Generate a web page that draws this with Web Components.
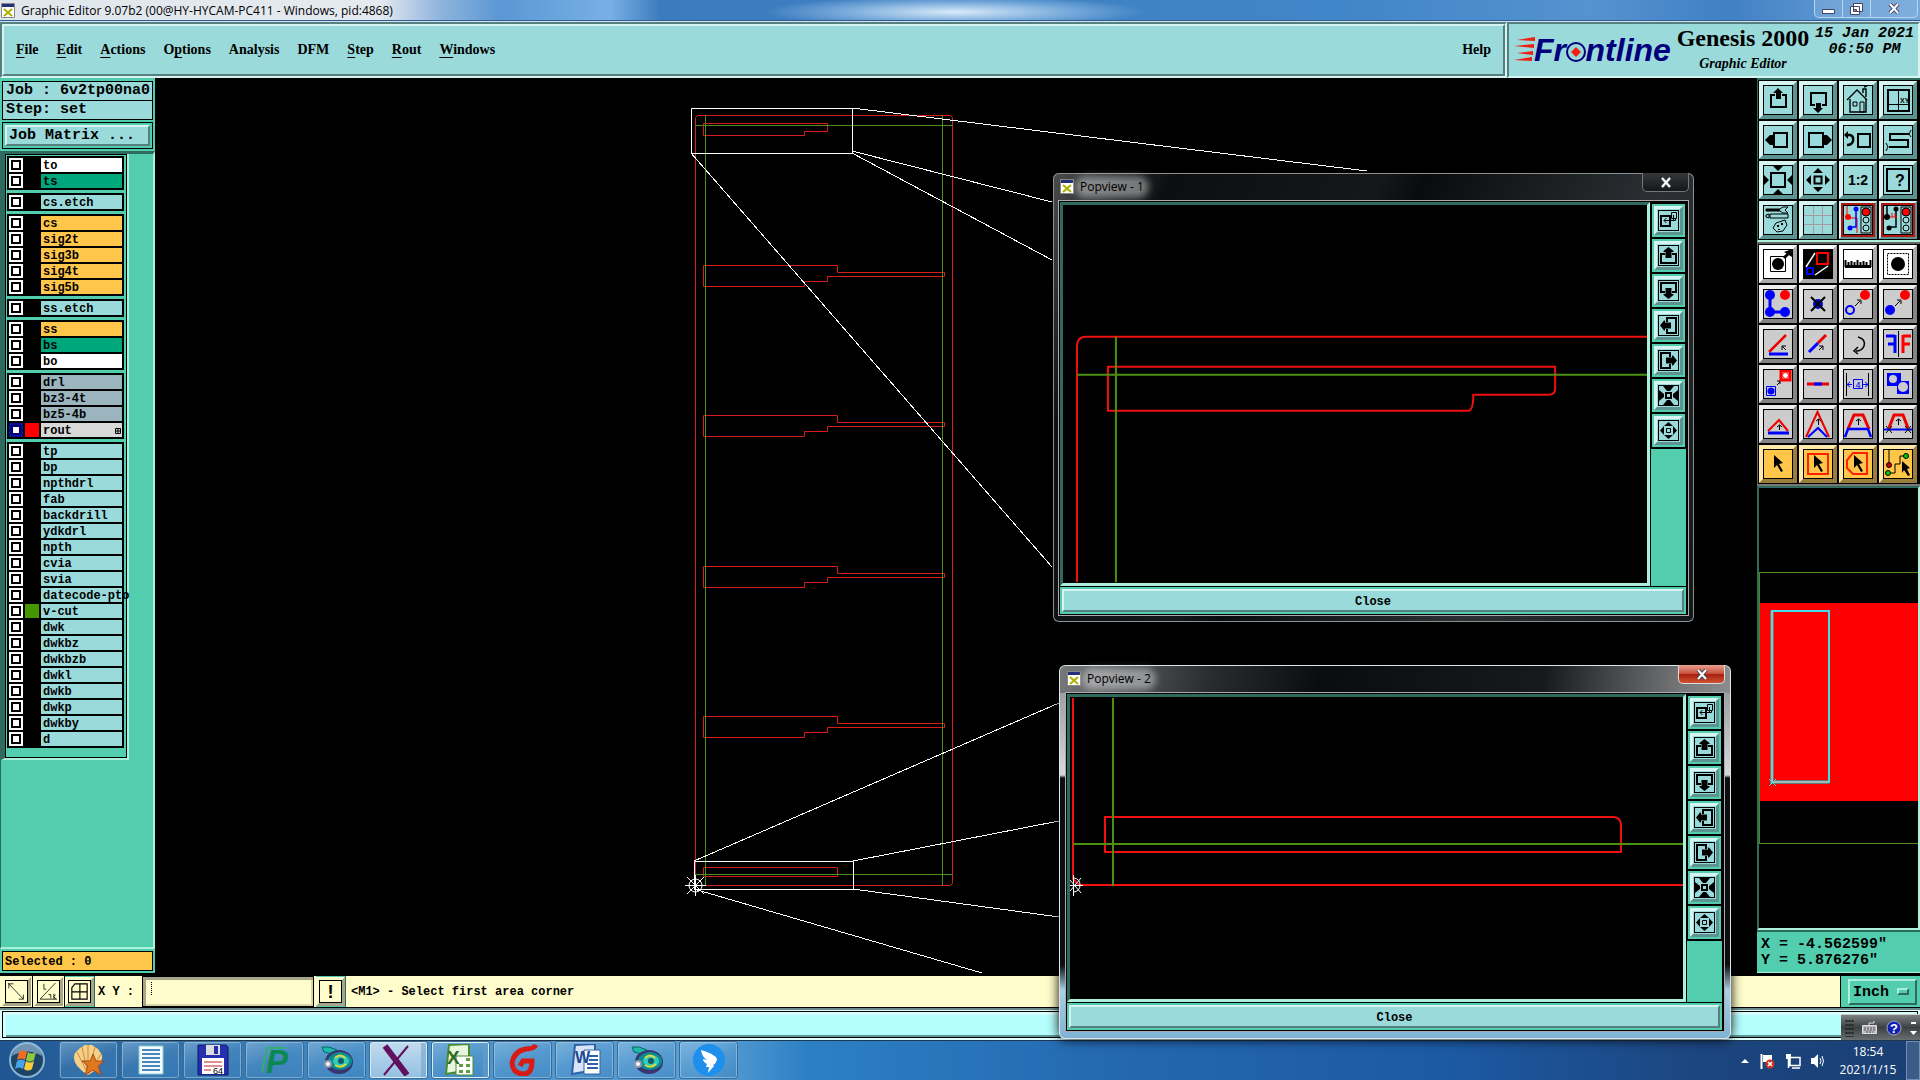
<!DOCTYPE html>
<html lang="en">
<head>
<meta charset="utf-8">
<title>Graphic Editor</title>
<style>
  html, body { margin: 0; height: 100%; }
  body {
    --face: #9adada; --face-hi: #d6f4f2; --face-lo: #55807f;
    --teal: #52ceae; --teal-hi: #aaf0dc; --teal-lo: #2f6a5e;
    --cream: #fffdcb; --amber: #ffc64a;
    --mono: "Liberation Mono", "Courier New", monospace;
    --serif: "Liberation Serif", "Times New Roman", serif;
    --ui: "Open Sans", "Noto Sans", sans-serif;
    background: #000;
    color: #000;
    font: 12px/16px var(--ui);
  }
</style>
</head>
<body>
<graphic-editor></graphic-editor>

<script>
// Tool glyphs, all on a 30x30 grid.
const ICONS = {
  up: '<path d="M12 10H8v12h15V10h-4" fill="none" stroke="#000" stroke-width="2"/><path d="M15 3l5 5h-2v6h-5V8h-3z"/>',
  down: '<path d="M12 20H8V8h15v12h-4" fill="none" stroke="#000" stroke-width="2"/><path d="M15 28l5-5h-2v-5h-5v5h-3z"/>',
  left: '<path d="M11 8h13v14H11z" fill="none" stroke="#000" stroke-width="2"/><path d="M2 15l5-5h4v10H7z"/>',
  right: '<path d="M6 8h14v14H6z" fill="none" stroke="#000" stroke-width="2"/><path d="M29 15l-5-5h-5v10h5z"/>',
  house: '<path d="M4 15L14 5l10 10M7 14v13h16V14M20 8V4h3v8M21 2l3-1" fill="none" stroke="#000" stroke-width="1.4"/><path d="M10 17h4v4h-4zM17 17h4v10h-4z" fill="none" stroke="#000"/>',
  xy: '<path d="M15.500 5v21M5 19.500h21" fill="none" stroke="#000"/><path d="M5 5h21v21H5z" fill="none" stroke="#000" stroke-width="2"/><text x="17" y="18" font-size="7" font-weight="700">XY</text>',
  back: '<path d="M15 9h12v13H15z" fill="none" stroke="#000" stroke-width="2"/><path d="M4 10h3q4 1 3 6-1 4-6 4" fill="none" stroke="#000" stroke-width="2.500"/><path d="M1 10l4-4v8z"/>',
  snake: '<path d="M26 9H7v6h18v7H6" fill="none" stroke="#000" stroke-width="2"/><path d="M28 5l-2 4 2 3M3 18l2 4-2 4" fill="none" stroke="#000"/>',
  fit: '<path d="M8 8h14v14H8z" fill="none" stroke="#000" stroke-width="2"/><path d="M10 1h10l-5 5zM10 29h10l-5-5zM1 10v10l5-5zM29 10v10l-5-5z"/>',
  zoom: '<path d="M11.500 11.500h7v7h-7z" fill="none" stroke="#000" stroke-width="2"/><path d="M10 8h10l-5-5zM10 22h10l-5 5zM8 10v10l-5-5zM22 10v10l5-5z"/>',
  ratio: '<text x="15" y="20" font-size="14" font-weight="700" text-anchor="middle">1:2</text>',
  help: '<path d="M4 4h22v22H4z" fill="none" stroke="#000" stroke-width="2"/><text x="17" y="21" font-size="16" font-weight="700" text-anchor="middle">?</text>',
  setup: '<path d="M3 4h14l3-2h5l-3 3 3 3h-5l-3-2H3zM3 10l3-1v4l-3-1zM7 9h18v4H7z" fill="#9adada" stroke="#000"/><path d="M3 4h14v2H3z"/><path d="M13 18l9-3 2 5-4 6-6 1-4-4z" fill="none" stroke="#000"/><path d="M14 20h2v2h-2zM18 18h2v2h-2zM15 24h2v1h-2z"/>',
  grid: '<path d="M10.500 1v28M19.500 1v28M1 10.500h28M1 19.500h28" stroke="#a89aa0"/>',
  netA: '<path d="M4 1v12h10v15" fill="none" stroke="#f00"/><path d="M13 4v18H8" fill="none" stroke="#00f" stroke-width="1.500"/><circle cx="5" cy="12" r="3" fill="#f00"/><circle cx="13" cy="4" r="2.500" fill="#00f"/><circle cx="7" cy="23" r="2.500" fill="#00f"/>',
  netB: '<path d="M4 1v12M13 4v18H8" fill="none" stroke="#000" stroke-width="1.500"/><path d="M5 12h9M9 8v4M12 8v4" stroke="#f00"/><circle cx="4" cy="12" r="3"/><circle cx="13" cy="4" r="2.500"/><circle cx="6" cy="23" r="2.500"/>',
  light: '<path d="M18 2h10v26H18z" fill="#9adada" stroke="#000"/><circle cx="23" cy="7" r="4" fill="#f00" stroke="#000"/><circle cx="23" cy="15" r="3" fill="none" stroke="#000"/><circle cx="23" cy="23" r="3" fill="none" stroke="#000"/>',
  pad: '<path d="M7.500 7.500h15v15h-15z" fill="none" stroke="#000"/><circle cx="15" cy="15" r="6"/><path d="M21 9l4-4" stroke="#000" stroke-width="3"/><path d="M21 3l8-3v8z"/>',
  popview: '<path d="M1 1h28v28H1z"/><path d="M12 4L3 18M25 17l-13 9" stroke="#fff" stroke-width="1.500"/><path d="M14 4h11v11H14z" fill="none" stroke="#f00" stroke-width="2"/><path d="M4 19h6v6H4z" fill="none" stroke="#00f" stroke-width="2"/>',
  ruler: '<path d="M2 17.500h26" stroke="#000" stroke-width="3"/><path d="M2.500 11v7M5.500 13v5M8.500 12v6M11.500 13v5M14.500 11v7M17.500 13v5M20.500 12v6M23.500 13v5M27.500 11v7" stroke="#000" stroke-width="2"/>',
  area: '<path d="M4.500 4.500h21v21h-21z" fill="none" stroke="#000" stroke-dasharray="2 1"/><circle cx="15" cy="15" r="7"/>',
  link: '<path d="M7 7v16h15" fill="none" stroke="#00f" stroke-width="3"/><g fill="#00f"><circle cx="7" cy="6" r="5"/><circle cx="7" cy="23" r="5"/><circle cx="22" cy="23" r="5"/></g><circle cx="22" cy="6" r="5" fill="#f00"/>',
  erase: '<circle cx="15" cy="15" r="5" fill="#00c"/><path d="M8 8l14 14M22 8L8 22" stroke="#000" stroke-width="2"/>',
  move: '<circle cx="22" cy="6" r="5" fill="#f00"/><circle cx="7" cy="21" r="4" fill="none" stroke="#00f" stroke-width="2"/><path d="M12 17l5-5M14 11h4v4" fill="none" stroke="#000"/>',
  copy: '<circle cx="22" cy="6" r="5" fill="#f00"/><circle cx="7" cy="21" r="5" fill="#00f"/><path d="M12 17l5-5M14 11h4v4" fill="none" stroke="#000"/>',
  angle: '<path d="M6 23L23 6" stroke="#e00" stroke-width="2.500"/><path d="M6 25h19" stroke="#00f" stroke-width="3"/><path d="M23 21l-4-4M19 21v-4h4" fill="none" stroke="#000"/>',
  stretch: '<path d="M15 14l8-8" stroke="#e00" stroke-width="3"/><path d="M6 23l9-9" stroke="#00f" stroke-width="3"/><path d="M16 21l4-4M16 17h4v4" fill="none" stroke="#000"/>',
  rotate: '<path d="M15 8q8 2 6 9-2 5-8 5M15 18l-4 4 4 3" fill="none" stroke="#000" stroke-width="1.500"/>',
  mirror: '<path d="M15.500 2v26" stroke="#000"/><path d="M12 6v18M12 7H3M12 15H5" fill="none" stroke="#00f" stroke-width="3"/><path d="M20 6v18M20 7h8M20 15h7" fill="none" stroke="#f00" stroke-width="3"/>',
  swap: '<path d="M18 2h9v9h-9z" fill="#fff" stroke="#f00" stroke-width="3"/><circle cx="22.500" cy="6.500" r="3" fill="#fff" stroke="#f00"/><path d="M3.500 17.500h9v9h-9z" fill="none" stroke="#00f"/><circle cx="8" cy="22" r="3.500" fill="#00f"/><path d="M14 16l3-3M14 12h3v3" fill="none" stroke="#000"/>',
  split: '<path d="M4 15h22" stroke="#e00" stroke-width="3"/><path d="M11 15h8" stroke="#00f" stroke-width="3"/>',
  width: '<path d="M3.500 4v23M25.500 4v23" stroke="#000"/><path d="M4 15.500h5M20 15.500h5M7 13l-3 2.500 3 2.500M22 13l3 2.500-3 2.500M10.500 10.500h9v9h-9z" fill="none" stroke="#00f"/><text x="15" y="19" font-size="9" fill="#00f" text-anchor="middle">4</text>',
  merge: '<path d="M4 4h14v8h8v13H14v-8H4z" fill="#00f"/><circle cx="10" cy="10" r="4" fill="#ccc"/><circle cx="20" cy="18" r="5" fill="#ccc"/>',
  tri: '<path d="M5 22L16 11l9 11" fill="none" stroke="#e00" stroke-width="2"/><path d="M5 24h21" stroke="#00f" stroke-width="3"/><path d="M16.500 21v-5M14 18l2.500-2 2.500 2" fill="none" stroke="#000"/>',
  peak: '<path d="M3 28L14.500 3 26 28" fill="none" stroke="#e00" stroke-width="2"/><path d="M5 28l10-9 9 9" fill="none" stroke="#00f" stroke-width="2"/><path d="M15.500 16v-6M13 12l2.500-2 2.500 2" fill="none" stroke="#000"/>',
  trap: '<path d="M5 20L11 6h9l6 14" fill="none" stroke="#e00" stroke-width="3"/><path d="M2 28l3-8h20l3 8" fill="none" stroke="#00f" stroke-width="2.500"/><path d="M15.500 16v-6M13 12l2.500-2 2.500 2" fill="none" stroke="#000"/>',
  cut: '<path d="M6 19L11 6h9l5 13" fill="none" stroke="#e00" stroke-width="3"/><path d="M1 20.500h28" stroke="#00f" stroke-width="2"/><path d="M15.500 16v-6M13 12l2.500-2 2.500 2M3 17l6 7M9 17l-6 7M22 17l6 7M28 17l-6 7" fill="none" stroke="#000"/>',
  arrow: '<path d="M11 6l9 8-4 1 4 7-2 1-4-7-3 3z"/>',
  boxSel: '<path d="M5 5h20v20H5z" fill="none" stroke="#f20" stroke-width="2"/><path d="M11 6l9 8-4 1 4 7-2 1-4-7-3 3z"/>',
  polySel: '<path d="M10 4h14v21H10l-6-6V11z" fill="none" stroke="#f20" stroke-width="2"/><path d="M11 6l9 8-4 1 4 7-2 1-4-7-3 3z"/>',
  netSel: '<path d="M6 1v14M5 24h7v-9h5V7h6" fill="none" stroke="#000"/><circle cx="6" cy="16" r="2.500" fill="#c00" stroke="#000"/><circle cx="5" cy="24" r="2.500" fill="#0c0" stroke="#000"/><circle cx="23" cy="7" r="2.500" fill="#0c0" stroke="#000"/><path d="M19 12l8 7-3 1 3 6-2 1-4-6-2 3z"/>',
  snap: '<path d="M4 4l20 21M5 11V5h6M24 19v6h-6" fill="none" stroke="#000"/>',
  slope: '<path d="M24 4L4 25h22M9 5v7h3M15 19h3v5M22 18v7M24 19l-2 3 3 3" fill="none" stroke="#000"/>',
  cells: '<path d="M9 5h16v20H5V10zM15.500 5v20M5 15.500h20" fill="none" stroke="#000" stroke-width="1.500"/>',
  bang: '<text x="15" y="24" font-size="24" font-weight="700" text-anchor="middle">!</text>'
};
ICONS.netA += ICONS.light;
ICONS.netB += ICONS.light;

// Smaller set for the popview side bar, on a 21x21 grid.
const MINI = {
  source: '<path d="M3 6h9v10H3z" fill="none" stroke="#000" stroke-width="2"/><path d="M13.500 2.500h5v6h-5zM17.500 8v2.500H6M8.500 8L6 10.500 8.500 13M15.500 5v5" fill="none" stroke="#000"/>',
  up: '<path d="M7 9H3v9h15V9h-4" fill="none" stroke="#000" stroke-width="2"/><path d="M10.500 2l5 4v1h-2v6h-6V7h-2V6z"/>',
  down: '<path d="M7 12H3V3h15v9h-4" fill="none" stroke="#000" stroke-width="2"/><path d="M10.500 19l5-4v-1h-2V8h-6v6h-2v1z"/>',
  left: '<path d="M9 7V3h9v15H9v-4" fill="none" stroke="#000" stroke-width="2"/><path d="M2 10.500l4-5h1v2h6v6H7v2H6z"/>',
  right: '<path d="M12 7V3H3v15h9v-4" fill="none" stroke="#000" stroke-width="2"/><path d="M19 10.500l-4-5h-1v2H8v6h6v2h1z"/>',
  fit: '<path d="M8 8h5v5H8z" fill="none" stroke="#000" stroke-width="2"/><path d="M5 1h11l-4 5H9zM5 20h11l-4-5H9zM1 5v11l5-4V9zM20 5v11l-5-4V9z"/>',
  zoom: '<path d="M8.500 8.500h4v4h-4z" fill="none" stroke="#000"/><path d="M6 6h9l-4.500-4zM6 15h9l-4.500 4zM6 6v9l-4-4.500zM15 6v9l4-4.500z"/>'
};

const X_ICON = `<svg class="x" width="14" height="15" viewBox="0 0 14 15" aria-hidden="true">
  <path d="M.5.500h13v14H.5z" fill="#fff" stroke="#888"/><path d="M1 1h12v3H1z" fill="#22307a"/>
  <path d="M3 6l8 7M11 6l-8 7" stroke="#b0b000" stroke-width="2"/></svg>`;

class ToolButton extends HTMLElement {
  constructor() {
    super();
    this.attachShadow({ mode: 'open' });
  }

  connectedCallback() {
    let name = this.getAttribute('icon');
    let mini = this.hasAttribute('mini');
    let size = mini ? 21 : 30;
    this.shadowRoot.innerHTML = `
      <style>
        :host { display: block; --bg: #9adada; --hi: #d6f4f2; --lo: #5d9492; }
        :host([tone="white"]) { --bg: #fff; --hi: #fff; --lo: #aaa; }
        :host([tone="grey"]) { --bg: #ccc; --hi: #eee; --lo: #848484; }
        :host([tone="amber"]) { --bg: #ffc64a; --hi: #ffe9a8; --lo: #9a7c3c; }
        :host([tone="cream"]) { --bg: #fffdcb; --hi: #fffdcb; --lo: #a8a68a; }
        button {
          display: grid; place-items: center; box-sizing: border-box;
          width: var(--size, 38px); height: var(--size, 38px); padding: 0;
          background: var(--bg); border: var(--bevel, 4px) solid;
          border-color: var(--hi) var(--lo) var(--lo) var(--hi);
        }
        svg { display: block; width: var(--glyph, 30px); height: var(--glyph, 30px); outline: 1px solid #000; outline-offset: -1px; font-family: "Liberation Sans", Arial, sans-serif; }
        :host([tone="red"]) svg { box-shadow: 0 0 0 2px #b01818; }
      </style>
      <button aria-label="${name}"><svg viewBox="0 0 ${size} ${size}">${mini ? MINI[name] : ICONS[name]}</svg></button>`;
  }
}
customElements.define('tool-button', ToolButton);

class TitleBar extends HTMLElement {
  constructor() {
    super();
    let root = this.attachShadow({ mode: 'open' });
    root.innerHTML = `
      <style>
        :host {
          display: flex; align-items: center; justify-content: space-between; box-sizing: border-box;
          height: 22px; border-bottom: 1px solid #cfe3f2; box-shadow: inset 0 -1px #2c5c90;
          background:
            radial-gradient(190px 16px at 955px 12px, #d8ebfa, #a9cdef88 60%, transparent),
            linear-gradient(90deg, #dfe6ec 0, #e4eaf0 380px, #8fb4dc 440px, #5b97d4 500px, #78b0e6 610px, #3c7cbe 660px, #4186c8 70%, #5592d0 83%, #4080c4 90%, #76a8da);
        }
        .name { display: flex; align-items: center; gap: 6px; padding-left: 1px; }
        .buttons { display: flex; align-self: flex-start; margin-right: 2px; border: 1px solid #b8d6f0; border-top: 0; border-radius: 0 0 5px 5px; background: #8fbae266; }
        button { height: 17px; width: 28px; padding: 0; border: 0; border-right: 1px solid #b8d6f0; background: none; display: grid; place-items: center; }
        button:last-child { width: 46px; border: 0; }
      </style>
      <div class="name">${X_ICON}<span><slot></slot></span></div>
      <div class="buttons">
        <button aria-label="Minimize"><svg width="13" height="12"><path d="M.5 6.500h12v4H.5z" fill="#fff" stroke="#446"/></svg></button>
        <button aria-label="Restore"><svg width="13" height="12"><path d="M3.500.500h9v8h-9zM.5 3.500h9v8h-9z" fill="#fff" stroke="#446"/><path d="M3.500 6.500h3v2h-3z" fill="#79b" stroke="#446"/></svg></button>
        <button aria-label="Close"><svg width="12" height="11"><path d="M2 1l8 9M10 1L2 10" stroke="#446" stroke-width="4"/><path d="M2 1l8 9M10 1L2 10" stroke="#fff" stroke-width="2"/></svg></button>
      </div>`;
  }
}
customElements.define('title-bar', TitleBar);

class MenuBar extends HTMLElement {
  constructor() {
    super();
    let root = this.attachShadow({ mode: 'open' });
    root.innerHTML = `
      <style>
        :host { display: flex; height: 56px; background: var(--face); }
        .frame { box-sizing: border-box; border: 2px solid; border-color: var(--face-lo) var(--face-hi) var(--face-hi) var(--face-lo); display: flex; }
        .menus { flex: 1; }
        .raised { flex: 1; display: flex; align-items: center; gap: 18px; padding: 0 12px 1px; border: 2px solid; border-color: var(--face-hi) var(--face-lo) var(--face-lo) var(--face-hi); }
        .brand { flex: 0 0 413px; min-width: 0; padding: 0 3px 0 5px; gap: 2px; }
        ::slotted(button) { border: 0; padding: 0; background: none; font: 700 14px/20px var(--serif); }
        ::slotted(.end) { margin-left: auto; }
        .logo { display: block; flex: none; margin-top: 4px; overflow: visible; font: italic 700 32px "Liberation Sans", Arial, sans-serif; }
        .product { flex: none; width: 138px; text-align: center; font: 700 24px/28px var(--serif); white-space: nowrap; }
        .product small { display: block; font: italic 700 14px/24px var(--serif); }
        time { flex: 1; text-align: center; font: italic 700 15px/16px var(--mono); padding-top: 2px; white-space: nowrap; }
      </style>
      <div class="frame menus"><div class="raised"><slot></slot></div></div>
      <div class="frame brand">
        <svg class="logo" width="158" height="44">
          <path d="M3 12l18-3v4zM0 18l20-2v4zM3 25l16-2v4zM0 32l18-3v4z" fill="#f02010"/>
          <text x="20" y="33" fill="#00007c">Fr<tspan fill="transparent">o</tspan>ntline</text>
          <circle cx="62" cy="24" r="9" fill="none" stroke="#00007c" stroke-width="2"/>
          <path d="M62 19l5 5-5 5-5-5z" fill="#f02010"/>
        </svg>
        <div class="product">Genesis 2000<small>Graphic Editor</small></div>
        <time>15 Jan 2021<br>06:50 PM</time>
      </div>`;
  }
}
customElements.define('menu-bar', MenuBar);

class LayerRow extends HTMLElement {
  constructor() {
    super();
    this.attachShadow({ mode: 'open' });
  }

  connectedCallback() {
    let on = this.hasAttribute('on');
    this.shadowRoot.innerHTML = `
      <style>
        :host { display: block; --row: var(--face); --swatch: #000; }
        :host([tone="white"]) { --row: #fff; }
        :host([tone="green"]) { --row: #00a67c; }
        :host([tone="amber"]) { --row: var(--amber); }
        :host([tone="slate"]) { --row: #9bb4be; }
        :host([tone="light"]) { --row: #d8d8d8; --swatch: #f00; }
        :host([cut]) { --swatch: #469600; }
        label { display: flex; gap: 2px; height: 14px; }
        input { appearance: none; margin: 0; width: 14px; height: 14px; box-sizing: border-box; border: 2px solid #fff; background: #fff; box-shadow: inset 0 0 0 2px #000; }
        input:checked { border-color: #0a0a9c; box-shadow: inset 0 0 0 2px #00006c; }
        i { width: 14px; background: var(--swatch); }
        span { width: 79px; padding-left: 2px; background: var(--row); font: 700 12px/16px var(--mono); white-space: nowrap; }
        svg { margin-left: -9px; margin-top: 5px; }
      </style>
      <label><input type="checkbox" ${on ? 'checked' : ''}><i></i><span><slot></slot></span>
      ${on ? '<svg width="6" height="6"><path d="M.5.500h5v5h-5zM3 0v6M0 3h6" fill="none" stroke="#000"/></svg>' : ''}</label>`;
  }
}
customElements.define('layer-row', LayerRow);

class LayerGroup extends HTMLElement {
  constructor() {
    super();
    let root = this.attachShadow({ mode: 'open' });
    root.innerHTML = `<style>:host{display:grid;gap:2px;padding:2px;background:#000;}</style><slot></slot>`;
  }
}
customElements.define('layer-group', LayerGroup);

class JobPanel extends HTMLElement {
  constructor() {
    super();
    let root = this.attachShadow({ mode: 'open' });
    root.innerHTML = `
      <style>
        :host { display: flex; flex-direction: column; box-sizing: border-box; width: 155px; padding: 3px 2px 2px; margin-bottom: 2px; background: var(--teal); font: 700 15px/18px var(--mono); }
        .job { border: 1px solid #000; background: var(--face); }
        .job div { padding-left: 3px; height: 18px; white-space: nowrap; }
        .job div + div { border-top: 1px solid #000; }
        .matrix { margin-top: 2px; padding: 2px; border: 1px solid #000; }
        button { display: block; width: 100%; height: 21px; padding: 0 0 0 2px; text-align: left; font: inherit; background: var(--face); border: 2px solid; border-color: var(--face-hi) var(--face-lo) var(--face-lo) var(--face-hi); }
        .well { flex: 1; margin: 2px -2px 0; border: solid; border-width: 3px 2px 2px 1px; border-color: var(--teal-lo) var(--teal-hi) var(--teal-hi) var(--teal-lo); }
        .list { width: 122px; border: solid; border-width: 0 2px 2px 4px; border-color: var(--teal-hi) var(--teal-hi) var(--teal-hi) var(--teal-lo); }
        .inner { display: grid; gap: 3px; padding: 1px 2px 9px 1px; border: 1px solid #000; }
        .selected { margin-top: 2px; padding-left: 2px; height: 18px; border: 1px solid #000; background: var(--amber); font: 700 12px/20px var(--mono); }
      </style>
      <div class="job"><div>Job : 6v2tp00na0</div><div>Step: set</div></div>
      <div class="matrix"><button>Job Matrix ...</button></div>
      <div class="well"><div class="list"><div class="inner"><slot></slot></div></div></div>
      <div class="selected">Selected : 0</div>`;
  }
}
customElements.define('job-panel', JobPanel);

class PopView extends HTMLElement {
  constructor() {
    super();
    this.attachShadow({ mode: 'open' });
  }

  connectedCallback() {
    let tools = Object.keys(MINI);
    this.shadowRoot.innerHTML = `
      <style>
        :host {
          position: absolute; z-index: 2; box-sizing: border-box; display: flex; flex-direction: column;
          padding: 0 5px 6px; border-radius: 6px; box-shadow: inset 0 0 0 1px #8a8f92;
          background: linear-gradient(115deg, #4a4c4e, #0c0e10 110px, #15171a 300px, #0a0b0c 340px, #2c3034 560px, #141618);
        }
        :host([active]) {
          padding: 0 6px 7px; box-shadow: inset 0 0 0 1px #dfe4e6, 0 0 12px #000;
          background:
            linear-gradient(100deg, #77797b, #2a2d30 150px, #0a0c0f 260px, #17191c 480px, #77797b 620px, #8a8c8e) 0 0 / 100% 28px no-repeat,
            linear-gradient(#8a8c8e, #d5d9db 110px, #0c0e12 113px, #0c0e12 300px, #a9cfe4 325px, #7fb2d6);
        }
        header { height: 27px; display: flex; justify-content: space-between; }
        .name { display: flex; align-items: center; gap: 6px; padding-left: 2px; }
        .name span { border-radius: 8px; background: #ffffff66; box-shadow: 0 0 7px 5px #ffffff66; line-height: 12px; }
        .x-close { width: 47px; height: 19px; padding: 0; border: 1px solid #777; border-top: 0; border-radius: 0 0 5px 5px; background: linear-gradient(#35383b, #15171a); display: grid; place-items: center; }
        :host([active]) .x-close { background: linear-gradient(#e8a090, #c8503c 48%, #a82010 52%, #d05030); border-color: #ddd; }
        .body { flex: 1; min-height: 0; display: grid; grid-template: minmax(0, 1fr) 27px / minmax(0, 1fr) 35px; gap: 1px; padding: 1px 2px 1px 1px; border: 1px solid #a8acae; background: #000; }
        .canvas { border: 3px solid; border-color: var(--teal-lo) var(--teal-hi) var(--teal-hi) var(--teal-lo); overflow: hidden; min-height: 0; }
        .tools { background: #000; display: flex; flex-direction: column; gap: 2px; padding-top: 2px; }
        .tools tool-button { padding: 2px; margin: 0 1px; background: var(--teal); --size: 29px; --bevel: 3px; --glyph: 21px; }
        .tools i { flex: 1; background: var(--teal); }
        .close { grid-column: 1 / -1; padding: 2px; background: var(--teal); }
        .close button { width: 100%; height: 23px; padding: 2px 0 0; background: var(--face); border: 2px solid; border-color: var(--face-hi) var(--face-lo) var(--face-lo) var(--face-hi); font: 700 12px/16px var(--mono); }
      </style>
      <header>
        <div class="name">${X_ICON}<span>${this.getAttribute('name')}</span></div>
        <button class="x-close" aria-label="Close window"><svg width="12" height="11"><path d="M2 1l8 9M10 1L2 10" stroke="#445" stroke-width="4"/><path d="M2 1l8 9M10 1L2 10" stroke="#fff" stroke-width="2"/></svg></button>
      </header>
      <div class="body">
        <div class="canvas"><slot></slot></div>
        <div class="tools">${tools.map((t) => `<tool-button mini icon="${t}"></tool-button>`).join('')}<i></i></div>
        <div class="close"><button>Close</button></div>
      </div>`;
  }
}
customElements.define('pop-view', PopView);

class WorkSpace extends HTMLElement {
  constructor() {
    super();
    let slit = (y) => `<path d="M703.500 ${y}.500h134v7h107v4h-117v5h-23v5h-101z"/>`;
    let root = this.attachShadow({ mode: 'open' });
    root.innerHTML = `
      <style>
        :host { display: block; position: relative; flex: 1; min-width: 0; background: #000; }
        svg { display: block; position: absolute; inset: 0; width: 100%; height: 100%; }
        pop-view svg { position: static; }
        g, path { fill: none; }
        .r { stroke: #d81c1c; } .g { stroke: #4f8f20; } .w { stroke: #fff; }
        .r2 { stroke: #f01010; stroke-width: 2; } .g2 { stroke: #4d9010; stroke-width: 2; }
        .one { left: 898px; top: 95px; width: 641px; height: 449px; }
        .two { left: 904px; top: 587px; width: 672px; height: 374px; }
      </style>
      <svg viewBox="155 78 1602 897" preserveAspectRatio="xMinYMin meet">
        <g class="r">
          <path d="M697.500 115.500h253l2 2v766l-2 2h-255v-768z"/>
          <path d="M703.500 123.500h124v8h-23v4h-101z"/>
          ${[265, 415, 566, 716].map(slit).join('')}
          <path d="M703.500 867.500h134v9h-134z"/>
        </g>
        <path class="g" d="M705.500 115v771M942.500 115v771M695 125.500h258M695 874.500h258"/>
        <g class="w">
          <path d="M691.500 108.500h161v45h-161zM694.500 861.500h159v28h-159z"/>
          <path shape-rendering="crispEdges" d="M852 108l515 63M852 151l200 51M852 153l200 107M691 153l361 414M694 861l365-158M853 861l206-40M853 889l206 28M694 889l288 84"/>
          <circle cx="695.500" cy="885.500" r="6.500"/>
          <path d="M685 885.500h21M695.500 875v21M687 877l17 17M704 877l-17 17"/>
        </g>
      </svg>
      <pop-view class="one" name="Popview - 1">
        <svg viewBox="1063 205 585 378" preserveAspectRatio="xMinYMin meet">
          <path class="r2" d="M1648 337h-562q-9 0-9 10v236"/>
          <path class="r2" d="M1108 367h448v22q0 6-7 6h-75q0 16-5 16h-361z"/>
          <path class="g2" d="M1116 337v246M1077 375h571"/>
        </svg>
      </pop-view>
      <pop-view class="two" name="Popview - 2" active>
        <svg viewBox="1070 697 613 302" preserveAspectRatio="xMinYMin meet">
          <path class="r2" d="M1073 698v181l6 6h604"/>
          <path class="r2" d="M1105 817h509q7 1 7 8v27h-516z"/>
          <path class="g2" d="M1113 698v188M1073 844h610"/>
          <path class="w" d="M1070 885.500h13M1073.500 875v21M1070 880l11 13M1070 891l11-13M1074 878q6 1 6 7t-6 7"/>
        </svg>
      </pop-view>`;
  }
}
customElements.define('work-space', WorkSpace);

class ToolPanel extends HTMLElement {
  constructor() {
    super();
    let cells = (names, tone) => names.split(' ').map((n) => `<tool-button icon="${n}" tone="${tone}"></tool-button>`).join('');
    let root = this.attachShadow({ mode: 'open' });
    root.innerHTML = `
      <style>
        :host { display: flex; flex-direction: column; width: 163px; box-sizing: border-box; }
        .grid { display: grid; grid-template-columns: repeat(4, 38px); gap: 2px; padding: 1px 0 1px 1px; border: 2px solid; border-color: var(--teal-lo) var(--teal-hi) var(--teal-hi) var(--teal-lo); border-right: 0; border-left-width: 1px; background: #000; }
        .edit { border-color: #666 #aaa #777 #666; }
        .map { flex: 1; min-height: 0; box-sizing: border-box; border: 2px solid; border-color: var(--teal-lo) var(--teal-hi) var(--teal-hi) var(--teal-lo); }
        .map svg { display: block; width: 100%; height: 100%; }
        output { display: block; padding: 5px 4px; margin-bottom: 2px; height: 30px; background: var(--teal); border-top: 2px solid var(--teal-lo); border-bottom: 1px solid var(--teal-hi); font: 700 15px/16px var(--mono); white-space: pre; }
      </style>
      <div class="grid">
        ${cells('up down house xy left right back snake fit zoom ratio help setup grid', '')}
        ${cells('netA netB', 'red')}
      </div>
      <div class="grid edit">
        ${cells('pad popview ruler area', 'white')}
        ${cells('link erase move copy angle stretch rotate mirror swap split width merge tri peak trap cut', 'grey')}
        ${cells('arrow boxSel polySel netSel', 'amber')}
      </div>
      <div class="map">
        <svg viewBox="1759 488 159 440" preserveAspectRatio="xMinYMin slice" shape-rendering="crispEdges">
          <path d="M1759 603h160v198h-160z" fill="#f00"/>
          <path d="M1759 572.500h160M1759 843.500h160M1759.500 572v272" stroke="#4a8a20"/>
          <path d="M1772 611v171h57" fill="none" stroke="#5a7a7a" stroke-width="4"/>
          <path d="M1772 611v171h57" fill="none" stroke="#a8b8b8" stroke-width="2"/>
          <path d="M1771 611h58v172" fill="none" stroke="#40dce8" stroke-width="2"/>
          <path d="M1769 779l7 7M1776 779l-7 7" stroke="#40dce8"/>
        </svg>
      </div>
      <output>X = -4.562599"
Y = 5.876276"</output>`;
  }
}
customElements.define('tool-panel', ToolPanel);

class PromptLine extends HTMLElement {
  constructor() {
    super();
    let root = this.attachShadow({ mode: 'open' });
    root.innerHTML = `
      <style>
        :host { display: flex; align-items: stretch; box-sizing: border-box; height: 33px; padding-left: 1px; border: solid #000; border-width: 1px 0; background: var(--cream); font: 700 12px/32px var(--mono); }
        tool-button { padding: 1px; border-right: 1px solid #000; --size: 29px; --bevel: 3px; --glyph: 23px; }
        tool-button.on { background: var(--teal); border-color: var(--teal-lo); padding: 1px 0; }
        label { padding-left: 3px; width: 44px; white-space: nowrap; }
        input {
          width: 172px; height: 31px; box-sizing: border-box; padding: 0 4px; border: 1px solid #000;
          background: repeating-linear-gradient(#000 0 1px, transparent 1px 2px) 8px 5px / 1px 14px no-repeat var(--cream);
          box-shadow: inset 3px 3px #a8a68a, inset -2px -2px #d8d6a8; font: 700 12px/16px var(--mono);
        }
        .bang { margin-left: 2px; }
        p { margin: 0; padding-left: 5px; flex: 1; }
        .unit { display: flex; align-items: center; box-sizing: border-box; width: 80px; padding: 0 3px 0 7px; background: var(--teal); border-left: 1px solid #000; }
        .option { flex: 1; display: flex; align-items: center; height: 22px; border: 2px solid; border-color: var(--teal-hi) var(--teal-lo) var(--teal-lo) var(--teal-hi); }
        select { appearance: none; flex: 1; min-width: 0; padding: 2px 0 0 3px; border: 0; background: none; font: 700 15px/20px var(--mono); color: #000; }
        .option i { width: 8px; height: 3px; margin-right: 6px; border: 2px solid; border-color: var(--teal-hi) var(--teal-lo) var(--teal-lo) var(--teal-hi); }
      </style>
      <tool-button icon="snap" tone="cream"></tool-button>
      <tool-button icon="slope" tone="cream"></tool-button>
      <tool-button class="on" icon="cells" tone="cream"></tool-button>
      <label for="xy">X Y :</label>
      <input id="xy" type="text">
      <tool-button class="on bang" icon="bang" tone="cream"></tool-button>
      <p>&lt;M1&gt; - Select first area corner</p>
      <div class="unit"><div class="option"><select aria-label="Units"><option>Inch</option></select><i></i></div></div>`;
  }
}
customElements.define('prompt-line', PromptLine);

class StatusLine extends HTMLElement {
  constructor() {
    super();
    let root = this.attachShadow({ mode: 'open' });
    root.innerHTML = `
      <style>
        :host { display: block; position: relative; box-sizing: border-box; height: 32px; padding: 1px 2px 0; border-top: 2px solid #6a8a8a; border-bottom: 2px solid #dff; background: #dff; }
        .bar { height: 17px; border: 1px solid #000; background: #b4fffe; box-shadow: inset 3px 3px #d8fffe, inset -2px -2px #5a9a98; padding: 4px; }
        .lang { position: absolute; right: 0; top: 4px; z-index: 3; display: flex; align-items: center; justify-content: space-between; box-sizing: border-box; width: 79px; height: 26px; padding: 0 3px 0 4px; border-top: 1px solid #ccc; background: linear-gradient(#7c8284, #3c4244 50%, #6a7072); }
      </style>
      <div class="bar"></div>
      <div class="lang">
        <svg width="9" height="18"><path d="M1.500 1v17M4.500 1v17M7.500 1v17" stroke="#222" stroke-dasharray="2 2" stroke-width="2"/></svg>
        <svg width="15" height="13"><path d="M.5 4.500h14v8H.5z" fill="#bbb" stroke="#ddd"/><path d="M2 7h11M2 9h11M4 11h7" stroke="#555" stroke-dasharray="2 1"/><path d="M7 4V2h5V0" fill="none" stroke="#ddd"/></svg>
        <svg width="16" height="16"><circle cx="8" cy="8" r="7" fill="#1020b0" stroke="#aab"/><text x="8" y="13" text-anchor="middle" font-family="Liberation Sans, sans-serif" font-size="13" font-weight="700" fill="#fff">?</text></svg>
        <svg width="7" height="16"><path d="M1 2h5v2H1zM0 11h7l-3.500 4z" fill="#fff"/></svg>
      </div>`;
  }
}
customElements.define('status-line', StatusLine);

// Taskbar pictures, 32x32.
const APPS = {
  Shell: '<path d="M15 31Q-3 20 2 9l5-5 5-3h7l6 4 4 6q1 12-14 20z" fill="#f6d088"/><path d="M15 30L4 8M15 30L9 3M15 30V1M15 30l7-27M15 30L28 10" stroke="#c88a38"/><path d="M20 10l3 7 8 0-6 5 3 9-8-5-8 5 3-9-6-5h8z" fill="#e07820" stroke="#a84c10"/>',
  Notes: '<path d="M4 2h24v28H4z" fill="#f4fbff" stroke="#8cc"/><path d="M7 6h18M7 10h18M7 14h18M7 18h18M7 22h18M7 26h18" stroke="#4888b8" stroke-width="2"/>',
  Floppy: '<path d="M1 1h28l2 2v28H1z" fill="#2430b0" stroke="#101860"/><path d="M9 1h14v10H9z" fill="#ddd"/><path d="M17 2h4v8h-4z" fill="#2430b0"/><path d="M5 14h22v16H5z" fill="#fff"/><path d="M7 18h18M7 22h18M7 26h7" stroke="#c02020"/><text x="16" y="30" font-size="9">64</text>',
  Planner: '<path d="M3 28L8 4h18" fill="none" stroke="#30b070" stroke-width="2"/><text x="7" y="29" font-size="33" font-style="italic" font-weight="700" fill="#0a8a50">P</text>',
  Disc: '<path d="M1 3h7l8 3-5 4-8-2z" fill="#20b8a8" stroke="#066"/><ellipse cx="18" cy="18" rx="14" ry="12" fill="#3a3470"/><ellipse cx="19" cy="17" rx="12" ry="9" fill="#0c8c90"/><ellipse cx="20" cy="17" rx="8" ry="6" fill="#30ccb8"/><path d="M14 14q5-5 10 0M14 21q6 4 11-1" fill="none" stroke="#e0d840" stroke-width="2"/><ellipse cx="20" cy="17" rx="3" ry="3" fill="#145a68"/><circle cx="7" cy="20" r="4" fill="#9098b0"/><circle cx="7" cy="20" r="2" fill="#fff"/>',
  Xming: '<path d="M5 2L27 31" stroke="#60105c" stroke-width="6"/><path d="M28 2L4 31" stroke="#60105c" stroke-width="2"/>',
  Excel: '<path d="M7 1l20-1v26L4 30z" fill="#e8f6dc" stroke="#4a8c30" stroke-width="2"/><path d="M14 12h17v19H14z" fill="#fff" stroke="#4a8c30"/><path d="M17 20h4v3h-4zM24 20h4v3h-4zM17 26h4v3h-4zM24 26h4v3h-4zM24 14h4v3h-4z" fill="#5aa040"/><text x="5" y="20" font-size="19" font-weight="700" fill="#2c6c20">X</text>',
  Genesis: '<path d="M29 1q-2 4-10 4Q7 7 5 19q1 11 12 11 8 0 8-13h-9l-3 5" fill="none" stroke="#d81c14" stroke-width="5"/>',
  Word: '<path d="M6 1l20-1v26L3 30z" fill="#d8e6f8" stroke="#3060a8" stroke-width="2"/><path d="M15 6h16v24H15z" fill="#fff" stroke="#3060a8"/><path d="M20 12h9M20 16h9M18 20h11M18 24h11" stroke="#3060a8" stroke-width="2"/><text x="6" y="19" font-size="16" font-weight="700" fill="#204890">W</text>',
  Talk: '<circle cx="16" cy="16" r="16" fill="#1e90ec"/><path d="M8 6q14 4 16 9-1 5-4 6l1 1-6 7 1-6h-3l1-3q-4-2-4-5l4 1q-5-3-6-10z" fill="#fff"/>'
};

class TaskBar extends HTMLElement {
  constructor() {
    super();
    let apps = 'Shell Notes Floppy Planner Disc Xming Excel Genesis Word Disc Talk'.split(' ');
    let root = this.attachShadow({ mode: 'open' });
    root.innerHTML = `
      <style>
        :host { display: flex; box-sizing: border-box; height: 40px; padding-left: 8px; color: #fff; border-top: 1px solid #20384e; background: linear-gradient(90deg, #1f5590, #4890c8 20%, #5a9fd4 37%, #2c80c4 42%, #2468b0 58%, #1c5aa4 75%, #1c4680 88%, #1a3f74); }
        button { padding: 0; border: 0; background: none; }
        .start { width: 38px; margin-right: 13px; }
        .apps { display: flex; gap: 3px; }
        .apps button { box-sizing: border-box; width: 59px; height: 38px; border: 1px solid #3a6c98; border-radius: 3px; box-shadow: inset 0 0 0 1px #a8d0ee88; background: linear-gradient(160deg, #9cc8e888, #5c9cd044 50%, #3880bc88); }
        .apps .run { padding-right: 6px; box-shadow: inset 0 0 0 1px #d8ecf8, inset -6px 0 #6aa0c888; }
        .apps .front { background: linear-gradient(#e0eef8cc, #a8cce8cc); }
        .apps svg { display: block; margin: auto; width: 32px; height: 32px; font-family: "Liberation Sans", Arial, sans-serif; }
        .tray { margin-left: auto; display: flex; align-items: center; gap: 9px; }
        .clock { text-align: center; line-height: 18px; width: 66px; }
        .peek { align-self: stretch; width: 14px; margin-left: -4px; border: 1px solid #7090b4; background: #3c5c88; }
      </style>
      <button class="start" aria-label="Start"><svg width="38" height="38" viewBox="0 0 38 38">
        <circle cx="19" cy="19" r="17" fill="#1c4468" stroke="#88b4d4" stroke-width="2"/><path d="M4 15q15-9 30 0-2-12-15-13Q7 3 4 15z" fill="#a8cce4" opacity=".6"/>
        <path d="M11 11q4-3 8 0l-2 8q-4-3-8 0z" fill="#f06c28"/><path d="M20 11q4 3 8 0l-2 8q-4 3-8 0z" fill="#90c83c"/>
        <path d="M9 20q4-3 8 0l-2 8q-4-3-8 0z" fill="#48a4e8"/><path d="M18 20q4 3 8 0l-2 8q-4 3-8 0z" fill="#fccc38"/></svg></button>
      <div class="apps">${apps.map((a) => `<button class="${a === 'Xming' ? 'run front' : a === 'Excel' ? 'run' : ''}" aria-label="${a}"><svg viewBox="0 0 32 32">${APPS[a]}</svg></button>`).join('')}</div>
      <div class="tray">
        <svg width="8" height="5"><path d="M0 5l4-4 4 4z" fill="#fff"/></svg>
        <svg width="18" height="16"><path d="M3.500 1v15" stroke="#fff" stroke-width="2"/><path d="M5 2h9v7H5z" fill="#fff"/><circle cx="12" cy="11" r="4.500" fill="#d03020"/><path d="M10 9l4 4M14 9l-4 4" stroke="#fff" stroke-width="1.500"/></svg>
        <svg width="16" height="16"><path d="M5 4.500h10v8H5zM7 15h8M3.500 5v10" fill="none" stroke="#fff" stroke-width="1.500"/><path d="M1 1h5v5H1z" fill="#fff"/></svg>
        <svg width="16" height="16"><path d="M1 5h3l4-4v14l-4-4H1z" fill="#fff"/><path d="M10 5q2 3 0 6M12 3q3 5 0 10" fill="none" stroke="#fff"/></svg>
        <div class="clock">18:54<br>2021/1/15</div>
        <button class="peek" aria-label="Show desktop"></button>
      </div>`;
  }
}
customElements.define('task-bar', TaskBar);

class GraphicEditor extends HTMLElement {
  constructor() {
    super();
    let rows = (names, attrs = '') => names.split(' ').map((n) => `<layer-row ${attrs}>${n}</layer-row>`).join('');
    let root = this.attachShadow({ mode: 'open' });
    root.innerHTML = `
      <style>
        :host { display: flex; flex-direction: column; min-height: 100vh; overflow-x: hidden; }
        main { flex: 1; display: flex; align-items: stretch; }
        u { text-underline-offset: 3px; }
      </style>
      <title-bar>Graphic Editor 9.07b2 (00@HY-HYCAM-PC411 - Windows, pid:4868)</title-bar>
      <menu-bar>
        <button><u>F</u>ile</button><button><u>E</u>dit</button><button><u>A</u>ctions</button><button>O<u>p</u>tions</button><button>Analysis</button><button>DFM</button><button><u>S</u>tep</button><button><u>R</u>out</button><button><u>W</u>indows</button>
        <button class="end">Help</button>
      </menu-bar>
      <main>
        <job-panel>
          <layer-group>${rows('to', 'tone="white"')}${rows('ts', 'tone="green"')}</layer-group>
          <layer-group>${rows('cs.etch')}</layer-group>
          <layer-group>${rows('cs sig2t sig3b sig4t sig5b', 'tone="amber"')}</layer-group>
          <layer-group>${rows('ss.etch')}</layer-group>
          <layer-group>${rows('ss', 'tone="amber"')}${rows('bs', 'tone="green"')}${rows('bo', 'tone="white"')}</layer-group>
          <layer-group>${rows('drl bz3-4t bz5-4b', 'tone="slate"')}${rows('rout', 'tone="light" on')}</layer-group>
          <layer-group>${rows('tp bp npthdrl fab backdrill ydkdrl npth cvia svia datecode-pto')}${rows('v-cut', 'cut')}${rows('dwk dwkbz dwkbzb dwkl dwkb dwkp dwkby d')}</layer-group>
        </job-panel>
        <work-space></work-space>
        <tool-panel></tool-panel>
      </main>
      <prompt-line></prompt-line>
      <status-line></status-line>
      <task-bar></task-bar>`;
  }
}
customElements.define('graphic-editor', GraphicEditor);
</script>
</body>
</html>
